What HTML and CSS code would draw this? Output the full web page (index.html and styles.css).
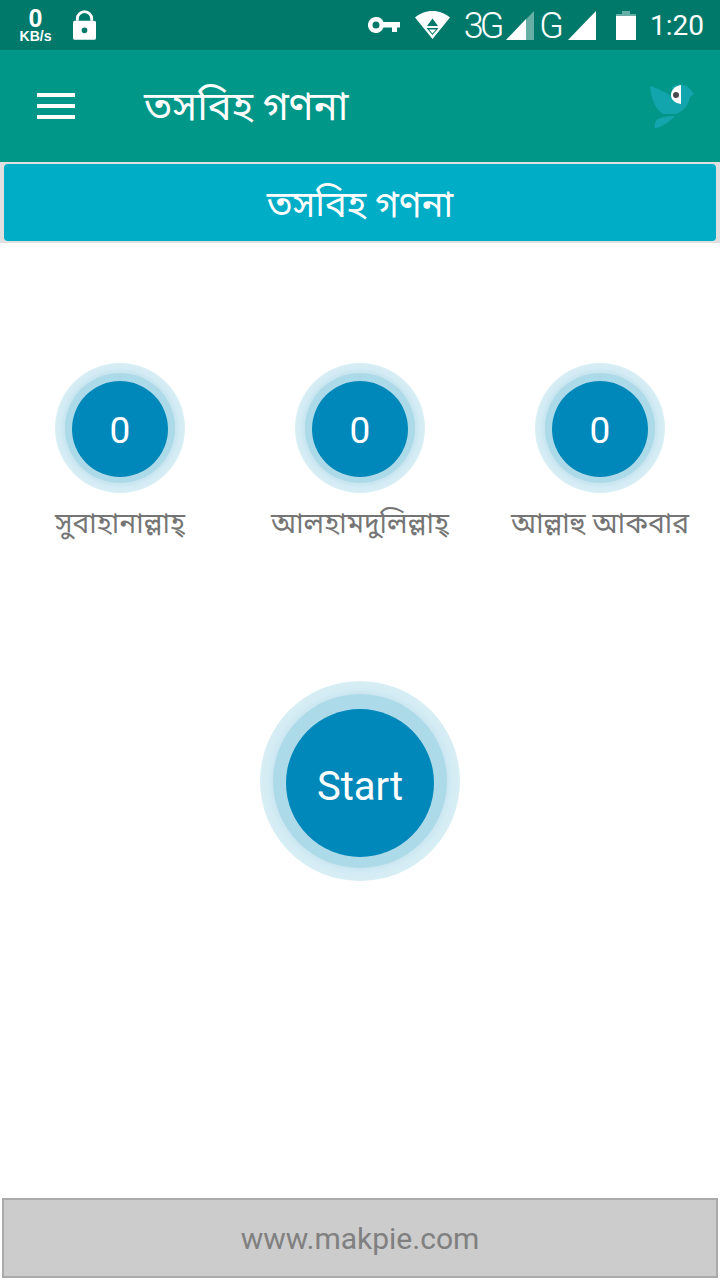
FILE: index.html
```html
<!DOCTYPE html>
<html>
<head>
    <meta charset="UTF-8">
    <title>তসবিহ গণনা</title>
    <link rel="stylesheet" href="styles.css">
</head>
<body>
    <div class="page">
        <!-- Status bar -->
        <div class="status-bar">
            <div class="speed">
                <span class="speed-num">0</span>
                <span class="speed-unit">KB/s</span>
            </div>
            <svg class="icon-lock" width="23" height="30" viewBox="0 0 24 31">
                <path d="M3 11V9a9 9 0 0 1 18 0v2h-3V9a6 6 0 0 0-12 0v2z" fill="#fff"/>
                <path fill-rule="evenodd" d="M2 11h20a2 2 0 0 1 2 2v16a2 2 0 0 1-2 2H2a2 2 0 0 1-2-2V13a2 2 0 0 1 2-2zm10 7a3 3 0 1 0 0 6 3 3 0 0 0 0-6z" fill="#fff"/>
            </svg>
            <div class="status-right">
                <svg class="icon-key" width="32" height="16" viewBox="0 0 32 16">
                    <path fill-rule="evenodd" d="M8 0a8 8 0 0 1 7.500 5H32v5.500h-3V15h-5v-4.500h-8.500A8 8 0 1 1 8 0zm0 4.500a3.500 3.500 0 1 0 0 7 3.500 3.500 0 0 0 0-7z" fill="#fff"/>
                </svg>
                <svg class="icon-wifi" width="35" height="28" viewBox="0 0 35 28">
                    <path fill-rule="evenodd" d="M17.500 0c7 0 12.500 2.500 17.500 6.500L17.500 28 0 6.500C5 2.500 10.500 0 17.500 0zm0 7.500l-5.500 7.500h11zm-6 9.500l6 7 6-7zm2.500 1.500h7l-3.500 4z" fill="#fff"/>
                </svg>
                <span class="net net-3g">3G</span>
                <svg class="icon-signal" width="28" height="29" viewBox="0 0 28 29">
                    <path d="M28 0v29H0z" fill="#fff" fill-opacity=".4"/>
                    <path d="M20 8v21H0z" fill="#fff"/>
                </svg>
                <span class="net net-g">G</span>
                <svg class="icon-signal-full" width="28" height="29" viewBox="0 0 28 29">
                    <path d="M28 0v29H0z" fill="#fff"/>
                </svg>
                <svg class="icon-battery" width="20" height="29" viewBox="0 0 20 29">
                    <path d="M6 0h8v3H6z" fill="#fff" fill-opacity=".4"/>
                    <path d="M0 3h20v5H0z" fill="#fff" fill-opacity=".4"/>
                    <path d="M0 5h20v24H0z" fill="#fff"/>
                </svg>
                <span class="clock">1:20</span>
            </div>
        </div>

        <!-- Toolbar -->
        <div class="toolbar">
            <div class="menu-btn">
                <span></span>
                <span></span>
                <span></span>
            </div>
            <div class="toolbar-title">তসবিহ গণনা</div>
            <svg class="bird" width="48" height="46" viewBox="0 0 48 46">
                <path d="M2 3C9 5 16 8 23 13L27 31L15 31C7 26 3 15 2 3z" fill="#13a5ad"/>
                <path d="M24 4C30 0 37 1 41 5L46 11L42 14C41 21 36 28 28 31L22 31L23 24z" fill="#13a5ad"/>
                <path d="M27 33C22 38 15 44 7 45C6 42 7 38 10 36C14 34 20 33 27 33z" fill="#13a5ad"/>
                <path d="M33 2C27 3 23 7 23 12C23 17 27 20 33 21z" fill="#fff"/>
                <circle cx="28" cy="12" r="3" fill="#4a4a4a"/>
            </svg>
        </div>

        <!-- Header strip -->
        <div class="strip">
            <div class="strip-title">তসবিহ গণনা</div>
        </div>

        <!-- Counters -->
        <div class="content">
            <div class="counters">
                <div class="counter">
                    <div class="ring">
                        <div class="ring-mid">
                            <div class="ring-core">0</div>
                        </div>
                    </div>
                    <div class="counter-label">সুবাহানাল্লাহ্</div>
                </div>
                <div class="counter">
                    <div class="ring">
                        <div class="ring-mid">
                            <div class="ring-core">0</div>
                        </div>
                    </div>
                    <div class="counter-label">আলহামদুলিল্লাহ্</div>
                </div>
                <div class="counter">
                    <div class="ring">
                        <div class="ring-mid">
                            <div class="ring-core">0</div>
                        </div>
                    </div>
                    <div class="counter-label">আল্লাহু আকবার</div>
                </div>
            </div>

            <div class="start-wrap">
                <div class="ring ring-big">
                    <div class="ring-mid">
                        <div class="ring-core">Start</div>
                    </div>
                </div>
            </div>
        </div>

        <!-- Footer -->
        <div class="footer">www.makpie.com</div>
    </div>
</body>
</html>
```

FILE: styles.css
```css
html, body {
    margin: 0;
    padding: 0;
}

body {
    font-family: Roboto, "Noto Sans", "Noto Sans Bengali", "Lohit Bengali", sans-serif;
    background-color: #fff;
}

.page {
    width: 720px;
    height: 1280px;
    display: flex;
    flex-direction: column;
    overflow: hidden;
}

/* Status bar */
.status-bar {
    height: 50px;
    flex: none;
    background-color: #00796b;
    color: #fff;
    display: flex;
    align-items: center;
    padding: 0 16px 0 18px;
}

.speed {
    width: 35px;
    display: flex;
    flex-direction: column;
    align-items: center;
    font-family: "Liberation Sans", Arial, sans-serif;
    font-weight: bold;
}

.speed-num {
    font-size: 25px;
    height: 22px;
    line-height: 22px;
}

.speed-unit {
    font-size: 14px;
    height: 14px;
    line-height: 14px;
}

.icon-lock {
    margin-left: 20px;
}

.status-right {
    margin-left: auto;
    display: flex;
    align-items: center;
}

.net {
    font-weight: 300;
    font-size: 36px;
    line-height: 50px;
    padding-top: 1px;
}

.icon-wifi {
    margin-left: 15px;
}

.net-3g {
    margin-left: 14px;
    letter-spacing: -4px;
}

.icon-signal {
    margin-left: 6px;
}

.net-g {
    margin-left: 5px;
    letter-spacing: -3px;
}

.icon-signal-full {
    margin-left: 7px;
}

.icon-battery {
    margin-left: 20px;
}

.clock {
    margin-left: 14px;
    font-size: 28px;
    line-height: 50px;
    padding-top: 2px;
}

/* Toolbar */
.toolbar {
    height: 112px;
    flex: none;
    background-color: #009688;
    display: flex;
    align-items: center;
    color: #fff;
}

.menu-btn {
    width: 38px;
    margin-left: 37px;
    display: flex;
    flex-direction: column;
    gap: 7px;
}

.menu-btn span {
    display: block;
    height: 4px;
    background-color: #fff;
}

.toolbar-title {
    margin-left: 69px;
    font-size: 40px;
    line-height: 50px;
    padding-top: 2px;
}

.bird {
    margin-left: auto;
    margin-right: 24px;
}

/* Header strip */
.strip {
    height: 81px;
    flex: none;
    box-sizing: border-box;
    padding: 2px 4px;
    background-color: #e0e0e0;
}

.strip-title {
    height: 77px;
    box-sizing: border-box;
    padding-top: 10px;
    background-color: #00adc7;
    border-radius: 4px;
    color: #fff;
    font-size: 36.500px;
    display: flex;
    align-items: center;
    justify-content: center;
}

/* Counters */
.content {
    flex: 1;
    display: flex;
    flex-direction: column;
}

.counters {
    display: grid;
    grid-template-columns: repeat(3, 240px);
    padding-top: 120px;
}

.counter {
    display: flex;
    flex-direction: column;
    align-items: center;
}

.ring {
    width: 130px;
    height: 130px;
    border-radius: 50%;
    background: radial-gradient(closest-side, #bfe0ec 80%, #d3ebf4 92%, #d8eef5 100%);
    display: flex;
    align-items: center;
    justify-content: center;
}

.ring-mid {
    width: 110px;
    height: 110px;
    border-radius: 50%;
    background-color: #addae9;
    display: flex;
    align-items: center;
    justify-content: center;
}

.ring-core {
    width: 96px;
    height: 96px;
    box-sizing: border-box;
    margin-top: 2px;
    padding-top: 3px;
    border-radius: 50%;
    background-color: #0088bb;
    color: #fff;
    font-size: 37px;
    display: flex;
    align-items: center;
    justify-content: center;
}

.counter-label {
    margin-top: 13px;
    font-size: 28.200px;
    line-height: 36px;
    color: #757575;
    white-space: nowrap;
}

.start-wrap {
    display: flex;
    justify-content: center;
    margin-top: 139px;
}

.ring-big {
    width: 200px;
    height: 200px;
}

.ring-big .ring-mid {
    width: 174px;
    height: 174px;
}

.ring-big .ring-core {
    width: 148px;
    height: 148px;
    margin-top: 4px;
    padding-top: 6px;
    font-size: 40px;
}

/* Footer */
.footer {
    flex: none;
    height: 80px;
    box-sizing: border-box;
    margin: 0 2px 2px;
    background-color: #cccccc;
    border: 2px solid #aaaaaa;
    color: #808080;
    font-size: 30px;
    display: flex;
    align-items: center;
    justify-content: center;
}
```
